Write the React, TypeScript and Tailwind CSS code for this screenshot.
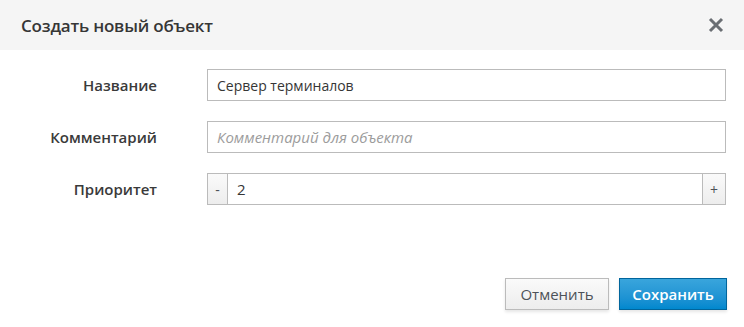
export default function App() {
  const font = { fontFamily: '"Open Sans", "Noto Sans", sans-serif' };
  return (
    <div className="w-[744px] h-[327px] bg-white flex flex-col text-[#363636]" style={font}>
      <div className="h-[50px] bg-[#f5f5f5] flex items-center justify-between pl-[21px] pr-[20px] shrink-0">
        <h1 className="text-[17px] font-semibold leading-none tracking-[-0.2px] text-[#363636]">Создать новый объект</h1>
        <button className="w-[16px] h-[16px] flex items-center justify-center">
          <svg width="16" height="16" viewBox="0 0 16 16">
            <path d="M2 2 L14 14 M14 2 L2 14" stroke="#6a6e73" strokeWidth="3" strokeLinecap="butt" />
          </svg>
        </button>
      </div>
      <div className="flex flex-col gap-5 pt-[19px] pr-[18px]">
        <div className="flex items-center h-8">
          <label className="w-[157px] text-right text-[15px] font-semibold text-[#3a3a3a]">Название</label>
          <div className="ml-[50px] flex-1 h-8 border border-[#bbbbbb] flex items-center px-[9px] text-[14px] text-[#363636]">
            Сервер терминалов
          </div>
        </div>
        <div className="flex items-center h-8">
          <label className="w-[157px] text-right text-[15px] font-semibold text-[#3a3a3a]">Комментарий</label>
          <div className="ml-[50px] flex-1 h-8 border border-[#bbbbbb] flex items-center px-[9px] text-[15px] italic text-[#9c9c9c]">
            Комментарий для объекта
          </div>
        </div>
        <div className="flex items-center h-8">
          <label className="w-[157px] text-right text-[15px] font-semibold text-[#3a3a3a]">Приоритет</label>
          <div className="ml-[50px] flex-1 h-8 border border-[#bbbbbb] flex items-stretch text-[14px]">
            <div className="w-[20px] bg-gradient-to-b from-[#fafafa] to-[#ededed] border-r border-[#bbbbbb] flex items-center justify-center text-[#4d5258]">-</div>
            <div className="flex-1 flex items-center px-[9px] text-[15px] text-[#363636]">2</div>
            <div className="w-[23px] bg-gradient-to-b from-[#fafafa] to-[#ededed] border-l border-[#bbbbbb] flex items-center justify-center text-[#4d5258]">+</div>
          </div>
        </div>
      </div>
      <div className="mt-auto mb-[17px] flex justify-end gap-[10px] pr-[17px]">
        <button className="w-[104px] h-8 border border-[#bbbbbb] bg-gradient-to-b from-[#fafafa] to-[#ededed] text-[#4d5258] text-[15px] shadow-[0_2px_3px_rgba(3,3,3,0.1)]">
          Отменить
        </button>
        <button className="w-[108px] h-8 border border-[#00659c] bg-gradient-to-b from-[#39a5dc] to-[#0088ce] text-white text-[15px] font-semibold shadow-[0_2px_3px_rgba(3,3,3,0.1)]">
          Сохранить
        </button>
      </div>
    </div>
  );
}
